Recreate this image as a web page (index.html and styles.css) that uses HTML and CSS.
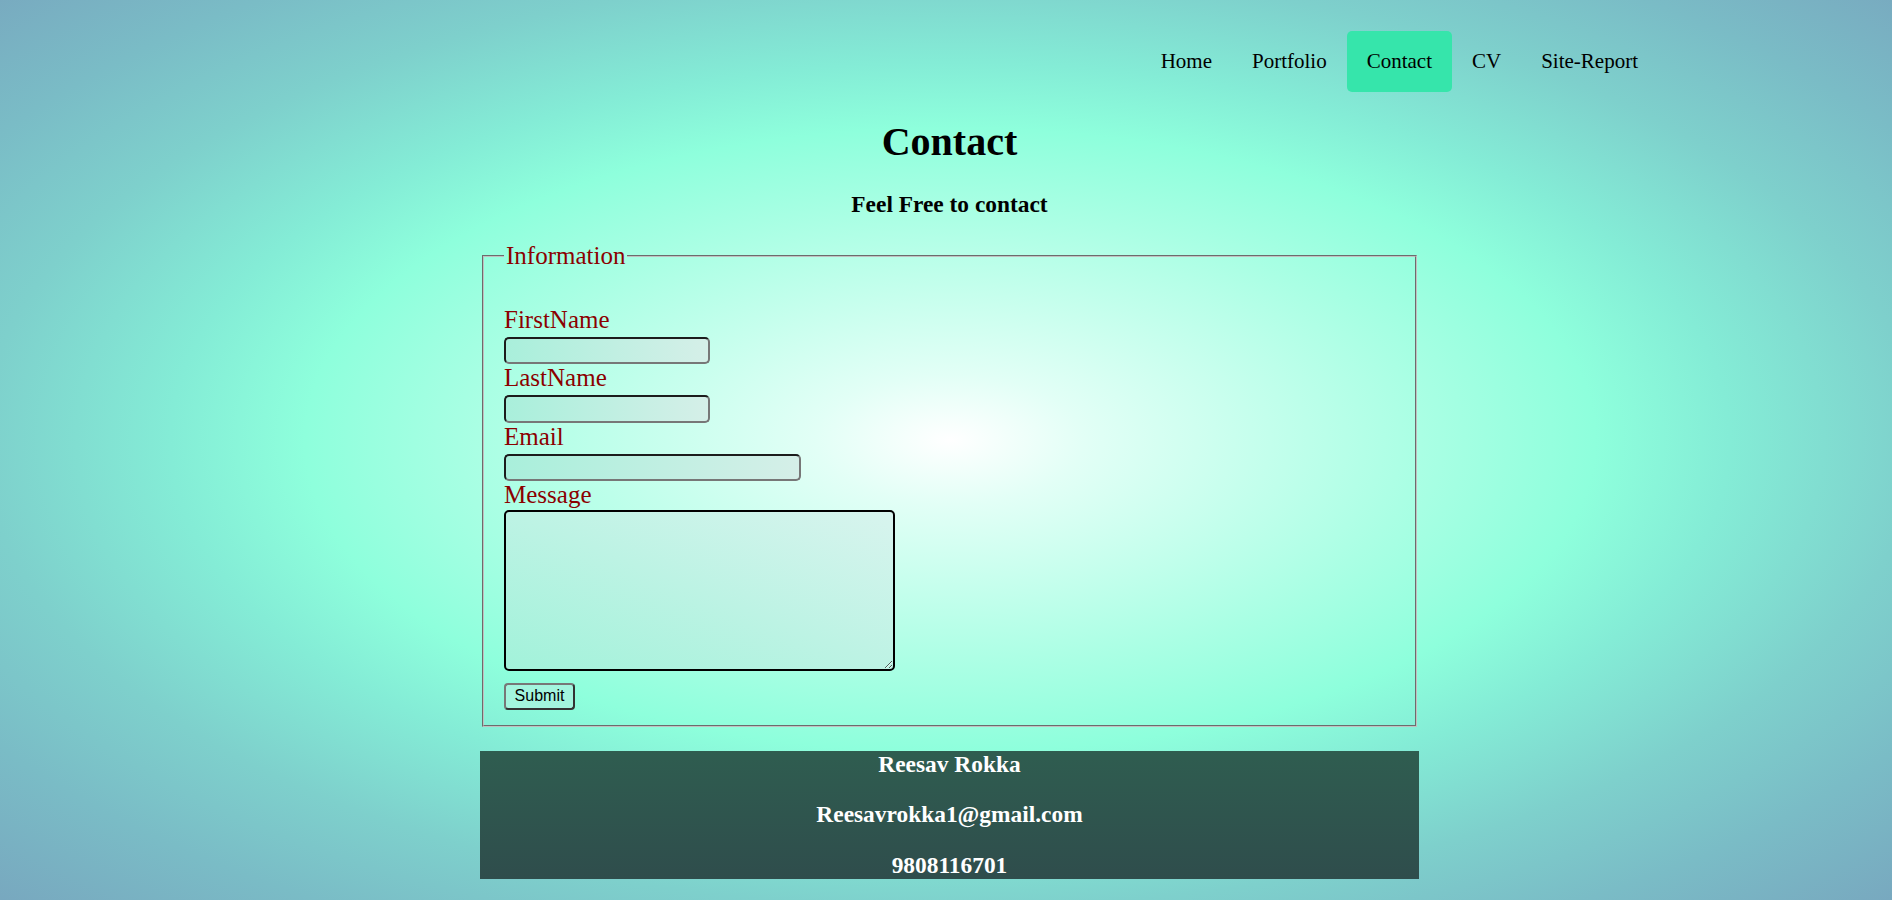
FILE: index.html
```html
<!DOCTYPE html>
<html lang="en">
<head>
<meta charset="utf-8">
<title>Contact</title>
<link rel="stylesheet" href="styles.css">
</head>
<body>
<header class="site-header">
  <nav class="nav">
    <a class="nav-link" href="#">Home</a>
    <a class="nav-link" href="#">Portfolio</a>
    <a class="nav-link nav-link-active" href="#">Contact</a>
    <a class="nav-link" href="#">CV</a>
    <a class="nav-link" href="#">Site-Report</a>
  </nav>
</header>
<main class="container">
  <h1 class="title">Contact</h1>
  <h3 class="subtitle">Feel Free to contact</h3>
  <form class="contact-form">
    <fieldset class="info">
      <legend class="info-legend">Information</legend>
      <label class="field-label" for="fn">FirstName</label>
      <input id="fn" class="field field-short" type="text">
      <label class="field-label" for="ln">LastName</label>
      <input id="ln" class="field field-short" type="text">
      <label class="field-label" for="em">Email</label>
      <input id="em" class="field field-long" type="email">
      <label class="field-label" for="msg">Message</label>
      <textarea id="msg" class="message"></textarea>
      <button class="submit" type="button">Submit</button>
    </fieldset>
  </form>
  <footer class="footer">
    <h3 class="footer-line">Reesav Rokka</h3>
    <h3 class="footer-line">Reesavrokka1@gmail.com</h3>
    <h3 class="footer-line">9808116701</h3>
  </footer>
</main>
</body>
</html>
```

FILE: styles.css
```css
html {
  height: 100%;
  background: radial-gradient(ellipse at 950px 440px,
    #ffffff 0%,
    #e2fff6 10%,
    #aaffe4 35%,
    #8effdc 48%,
    #84ecd6 58%,
    #7ed0cc 72%,
    #7abcc6 85%,
    #78a8bf 100%);
}

body {
  margin: 0;
  font-family: "Liberation Serif", "Times New Roman", serif;
  font-size: 20px;
  color: #000;
}

.site-header {
  display: flex;
  justify-content: flex-end;
  padding: 31px 234px 0 0;
}

.nav {
  display: flex;
}

.nav-link {
  display: block;
  padding: 0 20px;
  line-height: 61px;
  height: 61px;
  color: #000;
  text-decoration: none;
  font-size: 21px;
  border-radius: 5px;
}

.nav-link-active {
  background: #36e5ab;
}

.container {
  width: 939px;
  margin-left: calc(50% - 466px);
}

.title {
  font-size: 40px;
  font-weight: bold;
  text-align: center;
  margin: 25.5px 0 26px;
}

.subtitle {
  font-size: 23.4px;
  font-weight: bold;
  text-align: center;
  margin: 26px 0 24px;
}

.contact-form {
  margin: 0;
}

.info {
  margin: 0 2px;
  padding: 36px 20px 15.5px;
  border: 2px groove #c0c0c0;
  font-size: 25px;
  min-width: 0;
}

.info-legend {
  padding: 0 2px;
  color: #8b0000;
  font-size: 25px;
}

.field-label {
  display: block;
  color: #8b0000;
  font-size: 25px;
}

.field {
  display: block;
  box-sizing: border-box;
  height: 27.5px;
  margin: 3px 0 0;
  padding: 1px 4px;
  border: 2px solid;
  border-color: #1c1c1c #777 #777 #1c1c1c;
  border-radius: 5px;
  background: linear-gradient(to right, #a9efdb, #d5efe8);
  font-size: 16px;
}

.field-short {
  width: 206px;
}

.field-long {
  width: 297px;
}

.message {
  display: block;
  box-sizing: border-box;
  width: 391px;
  height: 161px;
  margin: 1px 0 0;
  border: 2px solid #000;
  border-radius: 5px;
  background: linear-gradient(to top right, #a2f2da, #d8f4ee);
  font-size: 16px;
}

.submit {
  display: block;
  box-sizing: border-box;
  width: 71px;
  height: 27px;
  margin-top: 11.5px;
  padding: 0;
  border: 2px solid;
  border-color: #777 #333 #333 #777;
  border-radius: 4px;
  background: #a3f5de;
  font-family: "Liberation Sans", Arial, sans-serif;
  font-size: 16px;
  color: #000;
}

.footer {
  margin-top: 24px;
  height: 127.5px;
  background: linear-gradient(to bottom, #2f5d50, #2f4d4c);
  color: #fff;
  text-align: center;
}

.footer-line {
  margin: 0 0 23.4px;
  font-size: 23.4px;
  font-weight: bold;
}

.footer-line:last-child {
  margin-bottom: 0;
}
```
